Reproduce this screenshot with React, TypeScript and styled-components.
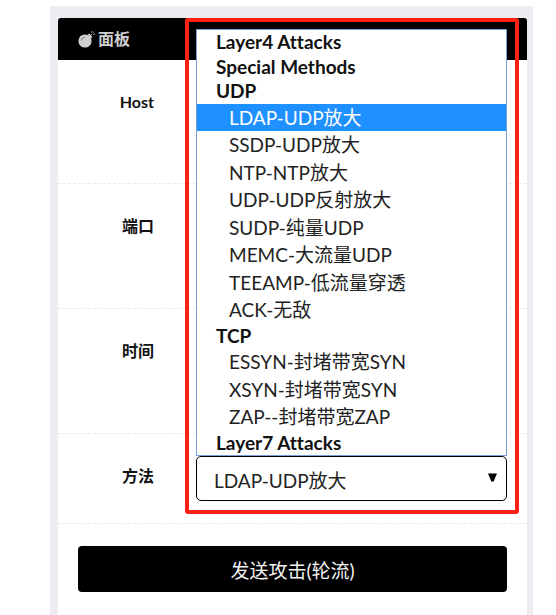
import React from "react";
import styled, { createGlobalStyle, css } from "styled-components";

const fontStack = `Lato, "Noto Sans CJK SC", sans-serif`;

const GlobalStyle = createGlobalStyle`
  *, *::before, *::after { box-sizing: border-box; }
  body {
    margin: 0;
    background: #ffffff;
    color: #111111;
    font-family: ${fontStack};
    font-size: 16px;
    font-variant-ligatures: none;
  }
`;

const Page = styled.main`
  display: flex;
  flex-direction: column;
  min-height: calc(100vh - 6px);
  margin: 6px 23px 0 50px;
  padding: 12px 6px 0 8px;
  background: #eeebf2;
`;

const Panel = styled.section`
  display: flex;
  flex: 1;
  flex-direction: column;
  border-radius: 3px 3px 0 0;
  background: #ffffff;
`;

const PanelHeader = styled.header`
  display: flex;
  align-items: center;
  gap: 3px;
  height: 42px;
  padding: 0 20px;
  border-radius: 3px 3px 0 0;
  background: #000000;
  color: #cfcfcf;
`;

const BombIcon = styled.svg`
  width: 17px;
  height: 17px;
`;

const PanelTitle = styled.h1`
  margin: 0;
  font-size: 16px;
  font-weight: 700;
  line-height: 24px;
`;

const Form = styled.form`
  display: flex;
  flex-direction: column;
`;

const FieldRow = styled.div<{ $tall?: boolean }>`
  display: grid;
  grid-template-columns: 118px 1fr;
  align-items: start;
  min-height: ${({ $tall }) => ($tall ? "125px" : "90px")};
  padding-top: 22px;
  border-bottom: 1px dashed #e9e8ec;

  &:first-child {
    min-height: 124px;
  }
`;

const FieldLabel = styled.label`
  padding: 8px 22px 0 0;
  font-size: 16px;
  font-weight: 700;
  line-height: 24px;
  text-align: right;
`;

const Control = styled.div`
  position: relative;
  margin: 0 20px;
`;

const controlBox = css`
  display: block;
  width: 100%;
  height: 45px;
  padding: 0 17px;
  border: 1px solid #000000;
  border-radius: 5px;
  background: #ffffff;
  color: #222222;
  font-family: ${fontStack};
  font-size: 19px;
`;

const TextInput = styled.input`
  ${controlBox}
`;

const MethodSelect = styled.select`
  ${controlBox}
  appearance: none;
  padding: 4px 17px 0;
`;

const Arrow = styled.svg`
  position: absolute;
  top: 17px;
  right: 10px;
  width: 9px;
  height: 9px;
  pointer-events: none;
`;

const Dropdown = styled.ul`
  position: absolute;
  z-index: 1;
  right: 0;
  bottom: 100%;
  left: 0;
  display: flex;
  flex-direction: column;
  height: 427px;
  margin: 0;
  padding: 0;
  border: 1px solid #7b9fdc;
  background: #ffffff;
  list-style: none;
`;

const GroupName = styled.li`
  flex: 1 0 24px;
  padding-left: 19px;
  font-size: 19px;
  font-weight: 700;
  line-height: 24px;
`;

const Choice = styled.li<{ $active: boolean }>`
  flex: 1 0 27px;
  padding-left: 32px;
  background: ${({ $active }) => ($active ? "#1e90ff" : "transparent")};
  color: ${({ $active }) => ($active ? "#ffffff" : "#222222")};
  font-size: 19px;
  line-height: 27px;
`;

const Highlight = styled.div`
  position: absolute;
  z-index: 2;
  top: -438px;
  right: -12px;
  bottom: -13px;
  left: -11px;
  border: 4px solid #ff2014;
  border-radius: 3px;
  pointer-events: none;
`;

const SubmitButton = styled.button`
  height: 46px;
  margin: 22px 20px;
  border: 0;
  border-radius: 4px;
  background: #000000;
  color: #f4f4f4;
  font-family: ${fontStack};
  font-size: 19px;
`;

const groups = [
  { name: "Layer4 Attacks", options: [] },
  { name: "Special Methods", options: [] },
  {
    name: "UDP",
    options: [
      "LDAP-UDP放大",
      "SSDP-UDP放大",
      "NTP-NTP放大",
      "UDP-UDP反射放大",
      "SUDP-纯量UDP",
      "MEMC-大流量UDP",
      "TEEAMP-低流量穿透",
      "ACK-无敌",
    ],
  },
  { name: "TCP", options: ["ESSYN-封堵带宽SYN", "XSYN-封堵带宽SYN", "ZAP--封堵带宽ZAP"] },
  { name: "Layer7 Attacks", options: [] },
];

const fields = [
  { id: "host", label: "Host" },
  { id: "port", label: "端口" },
  { id: "time", label: "时间" },
];

export default function App() {
  const [method, setMethod] = React.useState("LDAP-UDP放大");

  return (
    <>
      <GlobalStyle />
      <Page>
        <Panel>
          <PanelHeader>
            <BombIcon viewBox="0 0 17 17" aria-hidden>
              <circle cx="7" cy="10" r="6.6" fill="currentColor" />
              <path d="M9.6 3.8l1.6-1.2 3.2 3.2-1.2 1.6z" fill="currentColor" />
              <path d="M3.2 9.2C3.7 7.6 4.8 6.6 6.3 6.2" fill="none" stroke="#555555" strokeWidth="0.9" strokeLinecap="round" />
              <path d="M12.6 4.4l1.6-1.6M14 1.1v-1M15.9 3h1M13.2 1.4l.5.5M15.3 1.7l1-1M15.2 3.4l.6.6" fill="none" stroke="currentColor" strokeWidth="0.9" />
            </BombIcon>
            <PanelTitle>面板</PanelTitle>
          </PanelHeader>
          <Form onSubmit={(event) => event.preventDefault()}>
            {fields.map((field) => (
              <FieldRow key={field.id} $tall>
                <FieldLabel htmlFor={field.id}>{field.label}</FieldLabel>
                <Control>
                  <TextInput id={field.id} type="text" />
                </Control>
              </FieldRow>
            ))}
            <FieldRow>
              <FieldLabel htmlFor="method">方法</FieldLabel>
              <Control>
                <MethodSelect
                  id="method"
                  value={method}
                  onChange={(event) => setMethod(event.target.value)}
                >
                  {groups.map((group) => (
                    <optgroup key={group.name} label={group.name}>
                      {group.options.map((option) => (
                        <option key={option}>{option}</option>
                      ))}
                    </optgroup>
                  ))}
                </MethodSelect>
                <Arrow viewBox="0 0 9 9" aria-hidden>
                  <path d="M0 0.5h9L5.6 8.5H3.4z" fill="#000000" />
                </Arrow>
                <Dropdown role="listbox">
                  {groups.map((group) => (
                    <React.Fragment key={group.name}>
                      <GroupName role="presentation">{group.name}</GroupName>
                      {group.options.map((option) => (
                        <Choice
                          key={option}
                          role="option"
                          aria-selected={option === method}
                          $active={option === method}
                          onClick={() => setMethod(option)}
                        >
                          {option}
                        </Choice>
                      ))}
                    </React.Fragment>
                  ))}
                </Dropdown>
                <Highlight />
              </Control>
            </FieldRow>
            <SubmitButton type="submit">发送攻击(轮流)</SubmitButton>
          </Form>
        </Panel>
      </Page>
    </>
  );
}
